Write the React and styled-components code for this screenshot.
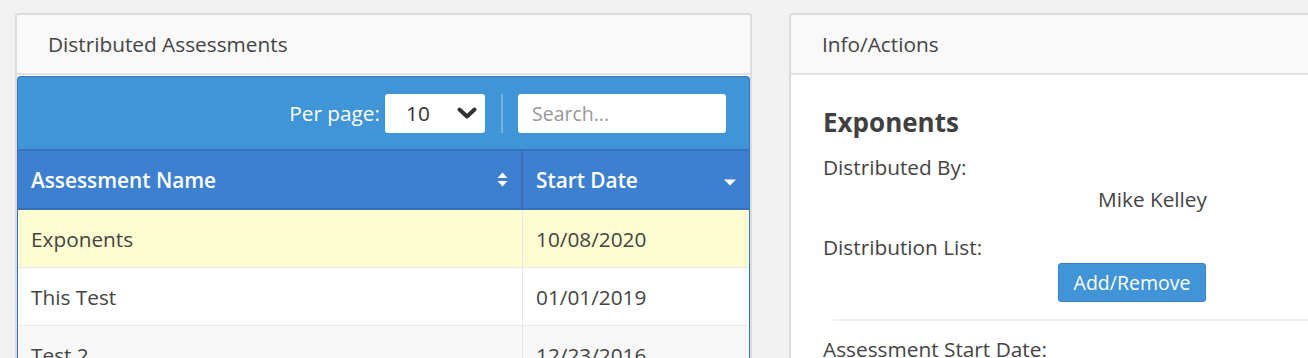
import React from "react";
import styled, { createGlobalStyle } from "styled-components";

const GlobalStyle = createGlobalStyle`
  html, body {
    margin: 0;
    padding: 0;
    height: 358px;
    overflow: hidden;
    background: #f2f2f2;
    font-family: "Open Sans", "Liberation Sans", sans-serif;
    color: #444;
  }
`;

const Page = styled.div`
  display: flex;
  gap: 37px;
  padding: 13px 0 0 15px;
  width: 1600px;
`;

const Panel = styled.div`
  width: 737px;
  flex-shrink: 0;
  box-sizing: border-box;
  border: 2px solid #dcdcdc;
  border-bottom: none;
  border-radius: 3px 3px 0 0;
  background: #fff;
  height: 360px;
`;

const PanelHeading = styled.div`
  height: 58px;
  display: flex;
  align-items: center;
  padding-left: 31px;
  background: #f9f9f9;
  border-bottom: 2px solid #e2e2e2;
  font-size: 20.8px;
  color: #444;
`;

const Widget = styled.div`
  margin-top: 1px;
  border: 1px solid #3774bd;
  border-bottom: none;
  border-radius: 4px 4px 0 0;
  background: #4095d6;
  overflow: hidden;
`;

const Toolbar = styled.div`
  height: 72px;
  display: flex;
  align-items: center;
  justify-content: flex-end;
  padding-right: 23px;
`;

const Label = styled.span`
  color: #fff;
  font-size: 20.8px;
  margin-right: 5px;
`;

const Select = styled.div`
  width: 100px;
  height: 39px;
  box-sizing: border-box;
  background: #fff;
  border-radius: 3px;
  display: flex;
  align-items: center;
  justify-content: space-between;
  padding: 0 8px 0 21px;
  font-size: 20.8px;
  color: #333;
`;

const Divider = styled.div`
  width: 2px;
  height: 39px;
  background: #79b2e2;
  margin: 0 15px 0 16px;
`;

const Search = styled.div`
  width: 208px;
  height: 39px;
  box-sizing: border-box;
  background: #fff;
  border-radius: 3px;
  display: flex;
  align-items: center;
  padding-left: 14px;
  font-size: 19.5px;
  color: #999;
`;

const Table = styled.div`
  display: grid;
  grid-template-columns: 505px 1fr;
  background: #fff;
`;

const HeadCell = styled.div`
  height: 57px;
  display: flex;
  align-items: center;
  justify-content: space-between;
  padding: 0 ${(p) => (p.$last ? "13px" : "13px")} 0 ${(p) => (p.$last ? "13px" : "13px")};
  background: #3e80d0;
  border-top: 2px solid #3774bd;
  border-right: ${(p) => (p.$last ? "none" : "2px solid #3670b8")};
  border-bottom: 2px solid #3670b8;
  color: #fff;
  font-size: 20.8px;
  font-weight: 600;
`;

const Cell = styled.div`
  height: 57px;
  display: flex;
  align-items: center;
  padding-left: ${(p) => (p.$last ? "13px" : "13px")};
  background: ${(p) => p.$bg};
  border-right: ${(p) => (p.$last ? "none" : "1px solid #e6e6e6")};
  border-bottom: 1px solid #e9e9e9;
  font-size: 20.8px;
  color: #444;
`;

const Content = styled.div`
  padding: 32px 0 0 32px;
`;

const Title = styled.div`
  font-size: 26px;
  font-weight: 700;
  line-height: 30px;
  color: #404040;
`;

const FieldLabel = styled.div`
  font-size: 20.8px;
  line-height: 28px;
  margin-top: ${(p) => p.$mt}px;
`;

const Value = styled.div`
  font-size: 20.8px;
  line-height: 28px;
  margin: 4px 0 0 275px;
`;

const Button = styled.button`
  display: block;
  margin: 2px 0 0 235px;
  width: 148px;
  height: 39px;
  box-sizing: border-box;
  background: #4194d6;
  border: 1px solid #3a80cf;
  border-radius: 3px;
  color: #fff;
  font-family: inherit;
  font-size: 19.5px;
  padding: 0;
  cursor: pointer;
`;

const Rule = styled.div`
  margin: 17px 0 0 10px;
  height: 2px;
  background: #eee;
`;

const SortBoth = () => (
  <svg width="11" height="17" viewBox="0 0 11 17">
    <path d="M0.5 7 L5.5 1.5 L10.5 7 Z" fill="#fff" />
    <path d="M0.5 10 L5.5 15.5 L10.5 10 Z" fill="#fff" />
  </svg>
);

const SortDesc = () => (
  <svg width="12" height="7" viewBox="0 0 12 7" style={{ marginTop: 6 }}>
    <path d="M0 0.5 L6 6.5 L12 0.5 Z" fill="#fff" />
  </svg>
);

const Chevron = () => (
  <svg width="20" height="12" viewBox="0 0 20 12">
    <polyline
      points="2.5,2.5 10,9.5 17.5,2.5"
      fill="none"
      stroke="#333"
      strokeWidth="4"
      strokeLinecap="round"
      strokeLinejoin="round"
    />
  </svg>
);

const rows = [
  { name: "Exponents", date: "10/08/2020", bg: "#fefdd2" },
  { name: "This Test", date: "01/01/2019", bg: "#fff" },
  { name: "Test 2", date: "12/23/2016", bg: "#f8f8f8" },
];

const App = () => {
  return (
    <>
      <GlobalStyle />
      <Page>
        <Panel>
          <PanelHeading>Distributed Assessments</PanelHeading>
          <Widget>
            <Toolbar>
              <Label>Per page:</Label>
              <Select>
                10
                <Chevron />
              </Select>
              <Divider />
              <Search>Search...</Search>
            </Toolbar>
            <Table>
              <HeadCell>
                Assessment Name
                <SortBoth />
              </HeadCell>
              <HeadCell $last>
                Start Date
                <SortDesc />
              </HeadCell>
              {rows.map((r) => (
                <React.Fragment key={r.name}>
                  <Cell $bg={r.bg}>{r.name}</Cell>
                  <Cell $bg={r.bg} $last>
                    {r.date}
                  </Cell>
                </React.Fragment>
              ))}
            </Table>
          </Widget>
        </Panel>
        <Panel>
          <PanelHeading>Info/Actions</PanelHeading>
          <Content>
            <Title>Exponents</Title>
            <FieldLabel $mt={16}>Distributed By:</FieldLabel>
            <Value>Mike Kelley</Value>
            <FieldLabel $mt={20}>Distribution List:</FieldLabel>
            <Button>Add/Remove</Button>
            <Rule />
            <FieldLabel $mt={14}>Assessment Start Date:</FieldLabel>
          </Content>
        </Panel>
      </Page>
    </>
  );
};

export default App;
